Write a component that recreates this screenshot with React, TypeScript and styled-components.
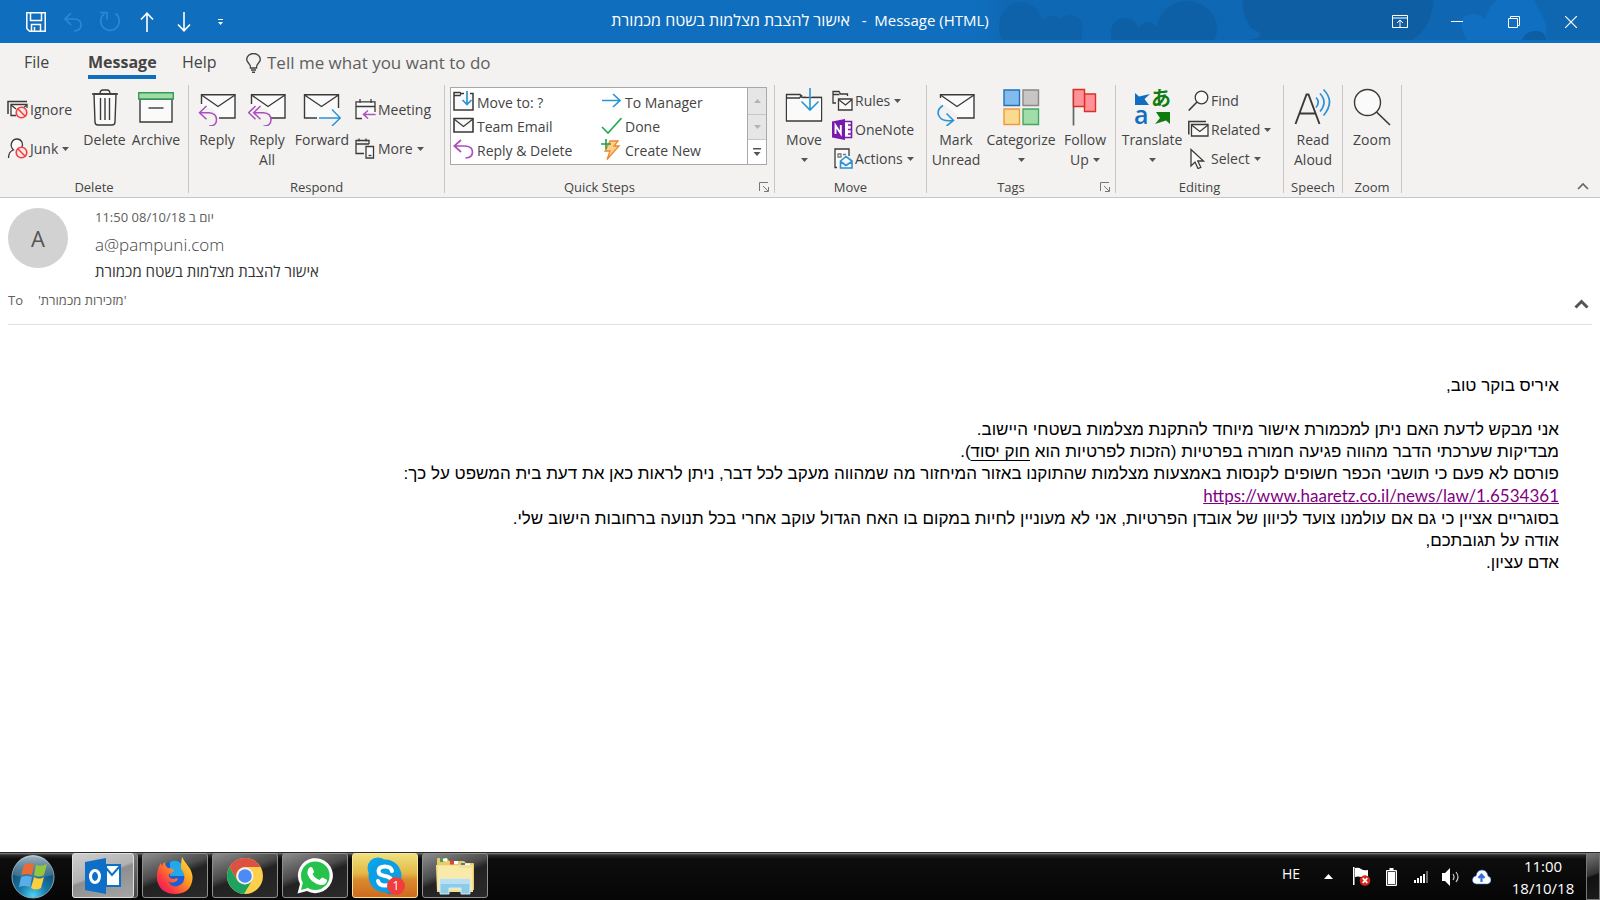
import React from "react";
import styled, { createGlobalStyle } from "styled-components";

const UI = `"Open Sans", "Noto Sans", "Liberation Sans", sans-serif`;
const INK = "#3b3a39";
const BLUE = "#2b93d4";
const PURPLE = "#ab4fbd";
const PAPER = "#fafafa";

const GlobalStyle = createGlobalStyle`
  *, *::before, *::after { box-sizing: border-box; }
  body { margin: 0; background: #fff; font-family: ${UI}; color: #444; }
  button { font: inherit; color: inherit; background: none; border: 0; padding: 0; cursor: pointer; }
  svg { display: block; flex: none; }
`;

const Page = styled.div`
  display: flex;
  flex-direction: column;
  min-height: 100vh;
`;

/* ---------- Title bar ---------- */

const TitleBar = styled.header`
  position: relative;
  display: grid;
  grid-template-columns: 1fr auto 1fr;
  align-items: center;
  height: 43px;
  background: #106ebe;
  color: #fff;
  overflow: hidden;
`;

const Backdrop = styled.svg`
  position: absolute;
  right: 0;
  top: 0;
`;

const QuickAccess = styled.div`
  display: flex;
  align-items: center;
  padding-left: 17px;
`;

const QuickButton = styled.button<{ $dim?: boolean }>`
  display: grid;
  place-items: center;
  width: 37px;
  height: 42px;
  color: ${(p) => (p.$dim ? "#2b88d8" : "#fff")};
`;

const WindowTitle = styled.h1`
  position: relative;
  margin: 0;
  font-size: 15px;
  font-weight: 400;
  line-height: 40px;
  align-self: start;
  white-space: pre;
  bdi { font-size: 16px; }
`;

const WindowButtons = styled.div`
  position: relative;
  display: flex;
  justify-content: flex-end;
  padding-right: 1px;
`;

const WindowButton = styled.button`
  display: grid;
  place-items: center;
  width: 57px;
  height: 42px;
`;

/* ---------- Ribbon ---------- */

const Tabs = styled.nav`
  display: flex;
  gap: 26px;
  height: 42px;
  padding-left: 24px;
  background: #f3f2f1;
`;

const Tab = styled.button<{ $width: number; $active?: boolean }>`
  width: ${(p) => p.$width}px;
  height: 36px;
  padding-top: 4px;
  border-bottom: 4px solid ${(p) => (p.$active ? "#106ebe" : "transparent")};
  font-size: 16px;
  font-weight: ${(p) => (p.$active ? 700 : 400)};
  line-height: 30px;
  text-align: left;
  white-space: nowrap;
`;

const TellMe = styled.label`
  display: flex;
  align-items: center;
  gap: 6px;
  height: 40px;
`;

const TellMeInput = styled.input`
  width: 260px;
  height: 28px;
  padding: 0 0 2px;
  border: 0;
  outline: 0;
  background: transparent;
  font-family: inherit;
  font-size: 17px;
  &::placeholder { color: #605e5c; opacity: 1; }
`;

const RibbonBar = styled.div`
  display: flex;
  height: 113px;
  background: #f3f2f1;
  border-bottom: 1px solid #c8c6c4;
`;

const Group = styled.section<{ $width: number }>`
  display: flex;
  flex-direction: column;
  flex: none;
  width: ${(p) => p.$width}px;
  height: 108px;
  border-right: 1px solid #c8c6c4;
`;

const GroupBody = styled.div<{ $columns: string; $inset: number }>`
  display: grid;
  flex: none;
  grid-template-columns: ${(p) => p.$columns};
  height: 93px;
  padding-left: ${(p) => p.$inset}px;
  align-items: start;
`;

const GroupFooter = styled.div`
  display: flex;
  flex: none;
  align-items: center;
  height: 18px;
  font-size: 13px;
  line-height: 18px;
  text-align: center;
  span { flex: 1; }
  button { display: grid; place-items: center; width: 20px; height: 18px; }
`;

const LargeButton = styled.button`
  display: flex;
  flex-direction: column;
  align-items: center;
  padding-top: 3px;
  font-size: 14px;
  line-height: 20px;
  white-space: nowrap;
  svg.large { margin-bottom: 4px; }
`;

const LabelLine = styled.span`
  display: flex;
  align-items: center;
  justify-content: center;
  gap: 4px;
  height: 20px;
`;

const Stack = styled.div<{ $row: number; $top: number; $left?: number }>`
  display: grid;
  grid-auto-rows: ${(p) => p.$row}px;
  padding: ${(p) => p.$top}px 0 0 ${(p) => p.$left ?? 0}px;
`;

const SmallButton = styled.button`
  display: flex;
  align-items: center;
  gap: 2px;
  font-size: 14px;
  line-height: 20px;
  white-space: nowrap;
  svg.caret { margin-left: 2px; }
`;

const Gallery = styled.div`
  display: flex;
  height: 78px;
  margin-top: 2px;
  border: 1px solid #a6a8ab;
  background: #fff;
`;

const GalleryItems = styled.div`
  display: grid;
  flex: 1;
  grid-template-columns: 148px 1fr;
  grid-auto-rows: 24px;
  padding: 3px 0 0 2px;
`;

const GalleryItem = styled.button`
  display: flex;
  align-items: center;
  gap: 3px;
  font-size: 14px;
  line-height: 24px;
  white-space: nowrap;
  svg { margin-bottom: 4px; }
`;

const GalleryScroll = styled.div`
  display: grid;
  grid-template-rows: 26px 25px 25px;
  width: 19px;
  border-left: 1px solid #a6a8ab;
`;

const ScrollButton = styled.button<{ $off?: boolean }>`
  display: grid;
  place-items: center;
  background: ${(p) => (p.$off ? "#e6e6e6" : "#fff")};
  color: ${(p) => (p.$off ? "#b3b3b3" : "#555")};
  & + & { border-top: 1px solid #c6c6c6; }
`;

const Collapse = styled.button`
  display: grid;
  place-items: center;
  align-self: flex-end;
  width: 34px;
  height: 22px;
  margin-left: auto;
`;

/* ---------- Message ---------- */

const MessageHeader = styled.section`
  display: grid;
  grid-template-columns: 87px 1fr;
  margin: 0 8px;
  padding-top: 10px;
  border-bottom: 1px solid #e1dfdd;
`;

const Avatar = styled.div`
  display: grid;
  place-items: center;
  width: 60px;
  height: 60px;
  border-radius: 50%;
  background: #d2d2d2;
  color: #555;
  font-size: 22px;
  line-height: 60px;
`;

const Sent = styled.div`
  font-size: 13px;
  line-height: 18px;
  color: #605e5c;
`;

const Sender = styled.div`
  font-size: 17px;
  font-weight: 300;
  line-height: 38px;
  color: #444;
`;

const Subject = styled.h2`
  margin: 0;
  font-size: 15px;
  font-weight: 400;
  line-height: 14px;
  color: #333;
`;

const Recipients = styled.div`
  grid-column: 1 / -1;
  display: flex;
  align-items: center;
  gap: 15px;
  height: 46px;
  padding-bottom: 3px;
  font-size: 13px;
  line-height: 18px;
  color: #605e5c;
`;

const HeaderToggle = styled.button`
  margin: 8px 3px 0 auto;
`;

const MessageBody = styled.main`
  flex: 1;
  padding: 50px 41px 24px;
  font-family: "Liberation Sans", Arial, sans-serif;
  font-size: 17px;
  line-height: 22px;
  color: #000;
`;

const Line = styled.p`
  margin: 0;
  min-height: 22px;
`;

const Reference = styled.a`
  color: #000;
  text-underline-offset: 3px;
`;

const NewsLink = styled.a`
  font-family: Lato, sans-serif;
  color: #800080;
`;

/* ---------- Taskbar ---------- */

const Taskbar = styled.footer`
  display: flex;
  align-items: stretch;
  height: 48px;
  padding-left: 11px;
  border-top: 1px solid #2a2a2a;
  background: linear-gradient(#8a8a8a 0, #2b2b2b 2px, #0d0d0d 6px, #060606 100%);
  color: #fff;
`;

const StartButton = styled.button`
  width: 61px;
`;

const Apps = styled.div`
  display: flex;
  gap: 4px;
  padding-bottom: 2px;
`;

const AppButton = styled.button<{ $tone?: "active" | "alert" }>`
  position: relative;
  display: grid;
  place-items: center;
  width: 66px;
  border: 1px solid ${(p) => (p.$tone === "alert" ? "#f7e7a0" : "#8f8f8f")};
  border-radius: 3px;
  background: ${(p) =>
    p.$tone === "active"
      ? "linear-gradient(160deg, #cfcfcf 0%, #b2b2b2 45%, #8e8e8e 50%, #a5a5a5 100%)"
      : p.$tone === "alert"
      ? "linear-gradient(#efe07c 0%, #e3b848 45%, #d98a2c 60%, #cf6a20 100%)"
      : "linear-gradient(160deg, #8d8d8d 0%, #4c4c4c 40%, #222 52%, #2a2a2a 100%)"};
`;

const Stacked = styled.div`
  display: flex;
  width: 66px;
  padding-right: 4px;
  border: 1px solid #8f8f8f;
  border-radius: 3px;
  background: linear-gradient(#777, #444);
  ${AppButton} { width: 62px; margin: -1px; border-color: #e0e0e0; }
`;

const Badge = styled.span`
  position: absolute;
  right: 12px;
  bottom: 2px;
  width: 18px;
  height: 18px;
  border-radius: 50%;
  background: #f03e3e;
  color: #fff;
  font-size: 12px;
  line-height: 18px;
  text-align: center;
`;

const Tray = styled.div`
  display: flex;
  align-items: center;
  margin-left: auto;
`;

const Language = styled.button`
  width: 20px;
  margin-right: 9px;
  padding-bottom: 5px;
  font-size: 14px;
  line-height: 18px;
`;

const TrayButton = styled.button<{ $wide?: boolean }>`
  display: grid;
  place-items: center;
  width: ${(p) => (p.$wide ? 36 : 30)}px;
  height: 46px;
`;

const Clock = styled.time`
  width: 90px;
  padding-left: 4px;
  font-size: 15px;
  line-height: 22px;
  text-align: center;
  span { display: block; }
`;

const ShowDesktop = styled.button`
  width: 14px;
  border: 1px solid #777;
  align-self: stretch;
  background: linear-gradient(160deg, #777, #333 45%, #111 50%, #1c1c1c);
`;

/* ---------- Icons ---------- */

type Kids = { children: React.ReactNode };

const Big = ({ children }: Kids) => (
  <svg className="large" width="38" height="38" viewBox="0 0 38 38" fill="none" stroke={INK} strokeWidth="1.4">{children}</svg>
);
const Small = ({ children }: Kids) => (
  <svg width="21" height="21" viewBox="0 0 21 21" fill="none" stroke={INK} strokeWidth="1.3">{children}</svg>
);
const Caret = () => (
  <svg className="caret" width="7" height="4" viewBox="0 0 7 4"><path d="M0 0h7L3.500 4z" fill="#555" /></svg>
);
const Launcher = () => (
  <svg width="10" height="10" viewBox="0 0 10 10" fill="none" stroke="#777"><path d="M.5 9V.5H9M4 4l5 5M9.500 5v4.500H5" /></svg>
);
const Envelope = ({ cut = "M3.500 16V6.700H37V30H21" }: { cut?: string }) => (
  <>
    <path d="M3.500 6.700H37V30H3.500z" fill={PAPER} stroke="none" />
    <path d={cut} /><path d="M3.500 7L20 18.500 37 7" />
  </>
);
const NoSign = ({ x, y }: { x: number; y: number }) => (
  <g stroke="#f04040" strokeWidth="1.600"><circle cx={x} cy={y} r="5.300" fill="#fbe9e9" /><path d={`M${x - 3.7} ${y - 3.7}l7.400 7.400`} /></g>
);

const IgnoreIcon = () => (
  <Small><path d="M1 15V2.500H20" strokeWidth="1.500" /><path d="M9 16.500H4V5.500H20V9" fill={PAPER} /><path d="M4 6l5 4M20 6l-4 3" /><NoSign x={14.5} y={13.5} /></Small>
);
const JunkIcon = () => (
  <Small><path d="M1.500 20c0-4 2-7 5-8-5-5-1-11 3.500-11s7 5 4.500 9" fill={PAPER} /><NoSign x={14.5} y={14.5} /></Small>
);
const TrashIcon = () => (
  <Big><path d="M8 6h22l-1 28q0 3-3 3H12q-3 0-3-3z" fill={PAPER} /><path d="M6 6h26M14 6q0-4 3-4h4q3 0 3 4M14.500 10v22M19 10v22M23.500 10v22" /></Big>
);
const ArchiveIcon = () => (
  <Big><path d="M3 11H35V34H3z" fill={PAPER} /><path d="M1.700 4.700H36.300V11H1.700z" fill="#a1dba9" stroke="#359b55" /><path d="M11.500 20h15" /></Big>
);
const ReplyIcon = () => (
  <Big><Envelope /><path d="M0 20h14l5 6v12H0z" fill="#f3f2f1" stroke="none" /><path d="M8.500 18L1.500 24.700 8.500 31.300M1.500 24.700H11q7.500.5 7.500 7T11 38" stroke={PURPLE} strokeWidth="1.500" /></Big>
);
const ReplyAllIcon = () => (
  <Big><Envelope /><path d="M0 20h18l5 6v12H0z" fill="#f3f2f1" stroke="none" /><path d="M7.500 18L.7 24.700 7.500 31.300M12.500 18L5.700 24.700l6.800 6.600M6 24.700H15.500q7.500.5 7.500 7T15.500 38" stroke={PURPLE} strokeWidth="1.500" /></Big>
);
const ForwardIcon = () => (
  <Big><path d="M1.500 6.700H35.500V30H1.500z" fill={PAPER} stroke="none" /><path d="M35.500 20V6.700H1.500V30H14M1.500 7L18.500 18.500 35.500 7" /><path d="M16 30H37M29 21.500L37.300 30 29 38" stroke={BLUE} strokeWidth="1.500" /></Big>
);
const MeetingIcon = () => (
  <Small><path d="M1 3H20V19H1z" fill={PAPER} stroke="none" /><path d="M7 19.500H1V2.800H20V13M1 7.500H20M5 0v4M16 0v4" /><path d="M13 11.500L8.500 15.500 13 19.500M8.500 15.500H20.500" stroke={PURPLE} strokeWidth="1.500" /></Small>
);
const MoreIcon = () => (
  <Small><path d="M9 15.500H1V2.500H14V6M1 6H14M4 .5v3M11 .5v3" /><path d="M11 8.500H18.500V20H11z" fill={PAPER} /><path d="M13.500 17.500h3" /></Small>
);
const MoveToIcon = () => (
  <Small><path d="M11 2.500H8L7 1.500H1V19H20V2.500H17" fill={PAPER} strokeWidth="1.500" /><path d="M1 4.500H7L8 2.500" /><path d="M14 0V13M9.500 9l4.500 4.500L18.500 9" stroke={BLUE} strokeWidth="1.700" /></Small>
);
const TeamIcon = () => (
  <Small><path d="M1 3.500H20V17H1z" fill={PAPER} strokeWidth="1.600" /><path d="M1 4l9.500 7.500L20 4" /></Small>
);
const ReplyDeleteIcon = () => (
  <Small><path d="M8 1L1.200 7 8 13M1.200 7H12.500q7 .5 7 6t-7 6" stroke={PURPLE} strokeWidth="1.700" /></Small>
);
const ToManagerIcon = () => (
  <Small><path d="M1 9.500H19M12 3l7 6.500L12 16" stroke={BLUE} strokeWidth="1.700" /></Small>
);
const DoneIcon = () => (
  <Small><path d="M1 12l6 6L20.500 3" stroke="#22b04e" strokeWidth="1.700" /></Small>
);
const CreateIcon = () => (
  <Small><path d="M9 2h8l-4 5h5L6 20.500 9 12H4z" fill="#fbd185" stroke="#ef8733" /><path d="M5 0v10M0 5h10" stroke="#22a04e" strokeWidth="1.600" /></Small>
);
const MoveIcon = () => (
  <Big><path d="M1.500 6.500V33H36.500V9.500H27M21 9.500H17L15 6.500H1.500V10H14.500L17 7" fill={PAPER} /><path d="M17 9.500H36V32H2V11H15z" fill={PAPER} stroke="none" /><path d="M36.500 9.500H17" /><path d="M25 0V22M16.500 13.500L25 22 33.500 13.500" stroke={BLUE} strokeWidth="1.600" /></Big>
);
const RulesIcon = () => (
  <Small><path d="M4 13H1V1.500H7L8.500 4H15.500V6M1 4.500H7.500" /><path d="M6.500 9H20V20H6.500z" fill={PAPER} /><path d="M6.500 9.500l7 5.500L20 9.500" /></Small>
);
const OneNoteIcon = () => (
  <Small><g stroke="none"><path d="M0 2.500L13 0V21L0 18.500z" fill="#7719aa" /><path d="M13 2.500H20V18.500H13z" fill="#fff" /></g><path d="M13 2.500H19.500V18.500H13M16 6H20M16 10.500H20M16 15H20" stroke="#7719aa" strokeWidth="1.600" /><path d="M3.500 15V6.500L8.800 14.500V6" stroke="#fff" strokeWidth="1.900" /></Small>
);
const ActionsIcon = () => (
  <Small><path d="M5 19.500H3V1H17V8" fill={PAPER} /><path d="M6 6h3v3H6zM11 6.500h3" stroke="#777" /><path d="M8.500 13L14 8.500 20 13V20H8.500zM8.500 13.500L14 17.500 20 13.500" fill={PAPER} stroke={BLUE} strokeWidth="1.600" /></Small>
);
const MarkUnreadIcon = () => (
  <Big><Envelope cut="M3.500 10V6.700H37V30H20" /><path d="M0 17h8l12 10v11H0z" fill="#f3f2f1" stroke="none" /><path d="M6 17.500Q-1 22 2 28t14 4.500M9.500 25.500L16.500 32.500 9.500 38" stroke={BLUE} strokeWidth="1.600" /></Big>
);
const CategorizeIcon = () => (
  <Big><path d="M2 2H17.500V17.500H2z" fill="#83bbec" stroke="#2272b9" /><path d="M21 2H36.500V17.500H21z" fill="#c8c6c4" stroke="#8a8886" /><path d="M2 21H17.500V36.500H2z" fill="#f8db8f" stroke="#ee9a3c" /><path d="M21 21H36.500V36.500H21z" fill="#a1dda9" stroke="#4aa564" /></Big>
);
const FlagIcon = () => (
  <Big><path d="M7.500 1V37.500" stroke="#666" strokeWidth="1.700" /><path d="M18.500 6H29.500V23.500H18.500z" fill="#ff9199" stroke="#d93025" /><path d="M7.500 1.500H18.500V18.500H7.500z" fill="#ff9199" stroke="#d93025" /></Big>
);
const TranslateIcon = () => (
  <svg className="large" width="38" height="38" viewBox="0 0 38 38" overflow="visible">
    <path d="M2 5l4 3.500L17 6l-5.500 5L16 17H2z" fill="#106ebe" />
    <path d="M37 36l-4-3.500L22 36l5-6-4-6H37z" fill="#107c10" />
    <text x="1" y="36" fontFamily="Open Sans, sans-serif" fontSize="25" fontWeight="600" fill="#106ebe">a</text>
    <text x="18" y="18" fontFamily="Noto Sans CJK JP, sans-serif" fontSize="20" fontWeight="700" fill="#107c10">あ</text>
  </svg>
);
const FindIcon = () => (
  <Small><circle cx="13.500" cy="7.500" r="6.300" fill={PAPER} /><path d="M9 12L.7 20.500" strokeWidth="1.600" /></Small>
);
const RelatedIcon = () => (
  <Small><path d="M.8 15.500V2.500H18" strokeWidth="1.500" /><path d="M3.500 5.500H20V17H3.500z" fill={PAPER} /><path d="M3.500 6l8.300 6.500L20 6" /></Small>
);
const SelectIcon = () => (
  <Small><path d="M3 1.500V18l4-4 3 6.500 2.800-1.200-3-6.300H15.500z" fill={PAPER} /></Small>
);
const ReadAloudIcon = () => (
  <Big><path d="M1.500 36L12.500 6.500h2L25.500 36M6 25.500H21" strokeWidth="1.900" /><path d="M22 9.500q4.500 4.500 0 10M26 5.500q8 8.500 0 18M29.500 1.500q12 12 0 26" stroke={BLUE} strokeWidth="1.700" /></Big>
);
const ZoomIcon = () => (
  <Big><circle cx="14.500" cy="14.500" r="13" fill={PAPER} /><path d="M23.500 24L37 37" strokeWidth="1.700" /></Big>
);

const StartOrb = () => (
  <svg width="44" height="44" viewBox="0 0 44 44">
    <defs>
      <radialGradient id="orb" cx=".5" cy=".95" r=".85"><stop offset="0" stopColor="#4fd4f5" /><stop offset=".4" stopColor="#1778a8" /><stop offset="1" stopColor="#123c5c" /></radialGradient>
      <linearGradient id="shine" x1="0" y1="0" x2="0" y2="1"><stop offset="0" stopColor="#cddbe2" stopOpacity=".8" /><stop offset="1" stopColor="#5d8ca6" stopOpacity=".4" /></linearGradient>
    </defs>
    <circle cx="22" cy="22" r="21" fill="url(#orb)" stroke="#8ea9b5" />
    <path d="M2 20A20 20 0 0 1 42 20Q22 26 2 20z" fill="url(#shine)" />
    <path d="M13 10q5-3 10-1l-2 11q-5-2-11 0z" fill="#ec6a33" />
    <path d="M25 10q5 2 11-1l-3 11q-5 3-10 0z" fill="#94c63d" />
    <path d="M10 22q5-2 11 0l-2 10q-6-2-11 0z" fill="#5aaee8" />
    <path d="M23 22q5 3 10 0l-3 11q-5 3-10 0z" fill="#fbcf3e" />
  </svg>
);
const OutlookIcon = () => (
  <svg width="38" height="38" viewBox="0 0 38 38">
    <path d="M22 8H36V29H22z" fill="#fff" stroke="#0f6fc6" strokeWidth="2" /><path d="M22 11l6 7 8-9" fill="none" stroke="#0f6fc6" strokeWidth="2" />
    <path d="M1 5L22 1V37L1 33z" fill="#0f6fc6" /><ellipse cx="11" cy="19.500" rx="4.500" ry="6" fill="none" stroke="#fff" strokeWidth="3" />
  </svg>
);
const FirefoxIcon = () => (
  <svg width="38" height="38" viewBox="0 0 38 38">
    <defs><linearGradient id="fox" x1="1" y1="0" x2="0" y2="1"><stop offset="0" stopColor="#fff04a" /><stop offset=".4" stopColor="#ff9a1e" /><stop offset=".75" stopColor="#fb3446" /><stop offset="1" stopColor="#d9127c" /></linearGradient></defs>
    <circle cx="19" cy="19" r="15" fill="#1a5fd6" /><path d="M14 5q8-4 13 4l2 10H14z" fill="#23a8ea" />
    <path d="M26 0q2 4 6 9 5 6 4.500 13Q35 36 20 37 4 37 1 23 0 13 5 6l1 3q1-3 3-4 0 4 3 6 4 0 6 2-1 3-5 4-1 2 1 4 3 2 7 0 2 2-2 4-5 2-7-1 3 7 10 5 8-3 6-12-1-3-3-5 0-8 1-12z" fill="url(#fox)" />
  </svg>
);
const ChromeIcon = () => (
  <svg width="38" height="38" viewBox="0 0 38 38">
    <circle cx="19" cy="19" r="18" fill="#fcd04b" /><path d="M3.400 10A18 18 0 0 1 34.600 10H19a9 9 0 0 0-8 13z" fill="#dd5144" />
    <path d="M3.400 10A18 18 0 0 0 18 37l8-13.500a9 9 0 0 1-15-.5z" fill="#1da261" /><circle cx="19" cy="19" r="8.500" fill="#f2f2f2" /><circle cx="19" cy="19" r="6.800" fill="#4c8bf5" />
  </svg>
);
const WhatsAppIcon = () => (
  <svg width="38" height="38" viewBox="0 0 38 38">
    <path d="M1.500 36.500L4 27A17.500 17.500 0 1 1 11 34z" fill="#fff" /><circle cx="19.300" cy="18.700" r="14.300" fill="#27c24c" /><path d="M5 33l2-8 5 6z" fill="#27c24c" />
    <path d="M13.500 10.500q2-1 3 .5l1.500 3.500q0 1-1.500 2.500 2.500 4.500 7 6l2-2q1-.8 2 0l3 1.500q1 .7 0 3-2 3-6 2.500-10-2-13-11-.5-4 2-6.500z" fill="#fff" />
  </svg>
);
const SkypeIcon = () => (
  <svg width="38" height="38" viewBox="0 0 38 38">
    <circle cx="12" cy="11" r="10.500" fill="#0aa5ea" /><circle cx="26" cy="27" r="10.500" fill="#0a8fd8" /><circle cx="19" cy="19" r="16.500" fill="#0c9fe6" />
    <path d="M26 14q-1-4.500-7-4.500T12.500 14q0 4 6.500 5t6.500 5q-.5 4.500-6.500 4.500T12 24" fill="none" stroke="#fff" strokeWidth="4" strokeLinecap="round" />
  </svg>
);
const ExplorerIcon = () => (
  <svg width="40" height="40" viewBox="0 0 40 40">
    <path d="M2 3q0-1 1-1h9l2 3h15l2 2h7q1 0 1 1v26H2z" fill="#e9cb6c" /><path d="M5 2h5v4H5z" fill="#4b9c4f" /><path d="M8 2.500h4v3H8zM17 5h6v3h-6zM29 7.500h6v3h-6z" fill="#fff" /><path d="M15 4.500h4v4h-4z" fill="#d9472f" /><path d="M26 7h4v4h-4z" fill="#3a7dc0" />
    <path d="M1 9h37v27H2z" fill="#f5e091" /><path d="M3 10h20l2 2h12v22H3z" fill="#f9eaa9" />
    <path d="M5 25q0-2 2-2h26q2 0 2 2v13h-9v-6H14v6H5z" fill="#8ecbe8" stroke="#c9ecf9" /><path d="M5 25q0-2 2-2h26q2 0 2 2v3H5z" fill="#b9e0f2" />
  </svg>
);

/* ---------- Screen ---------- */

const subject = "אישור להצבת מצלמות בשטח מכמורת";

function Ribbon() {
  return (
    <RibbonBar>
      <Group $width={189}>
        <GroupBody $columns="73px 49px 54px" $inset={7}>
          <Stack $row={39} $top={5}>
            <SmallButton><IgnoreIcon />Ignore</SmallButton>
            <SmallButton><JunkIcon />Junk<Caret /></SmallButton>
          </Stack>
          <LargeButton><TrashIcon /><LabelLine>Delete</LabelLine></LargeButton>
          <LargeButton><ArchiveIcon /><LabelLine>Archive</LabelLine></LargeButton>
        </GroupBody>
        <GroupFooter><span>Delete</span></GroupFooter>
      </Group>
      <Group $width={256}>
        <GroupBody $columns="50px 50px 60px 1fr" $inset={3}>
          <LargeButton><ReplyIcon /><LabelLine>Reply</LabelLine></LargeButton>
          <LargeButton><ReplyAllIcon /><LabelLine>Reply</LabelLine><LabelLine>All</LabelLine></LargeButton>
          <LargeButton><ForwardIcon /><LabelLine>Forward</LabelLine></LargeButton>
          <Stack $row={39} $top={5} $left={3}>
            <SmallButton><MeetingIcon />Meeting</SmallButton>
            <SmallButton><MoreIcon />More<Caret /></SmallButton>
          </Stack>
        </GroupBody>
        <GroupFooter><span>Respond</span></GroupFooter>
      </Group>
      <Group $width={330}>
        <GroupBody $columns="317px" $inset={5}>
          <Gallery>
            <GalleryItems>
              <GalleryItem><MoveToIcon />Move to: ?</GalleryItem>
              <GalleryItem><ToManagerIcon />To Manager</GalleryItem>
              <GalleryItem><TeamIcon />Team Email</GalleryItem>
              <GalleryItem><DoneIcon />Done</GalleryItem>
              <GalleryItem><ReplyDeleteIcon />Reply &amp; Delete</GalleryItem>
              <GalleryItem><CreateIcon />Create New</GalleryItem>
            </GalleryItems>
            <GalleryScroll>
              <ScrollButton $off aria-label="Previous row"><svg width="7" height="4"><path d="M0 4h7L3.500 0z" fill="currentColor" /></svg></ScrollButton>
              <ScrollButton $off aria-label="Next row"><svg width="7" height="4"><path d="M0 0h7L3.500 4z" fill="currentColor" /></svg></ScrollButton>
              <ScrollButton aria-label="More quick steps"><svg width="8" height="8"><path d="M0 0h8v1.500H0zM.5 4h7L4 8z" fill="currentColor" /></svg></ScrollButton>
            </GalleryScroll>
          </Gallery>
        </GroupBody>
        <GroupFooter><span>Quick Steps</span><button aria-label="Quick Steps options"><Launcher /></button></GroupFooter>
      </Group>
      <Group $width={152}>
        <GroupBody $columns="48px 1fr" $inset={5}>
          <LargeButton><MoveIcon /><LabelLine>Move</LabelLine><LabelLine><Caret /></LabelLine></LargeButton>
          <Stack $row={29} $top={1} $left={4}>
            <SmallButton><RulesIcon />Rules<Caret /></SmallButton>
            <SmallButton><OneNoteIcon />OneNote</SmallButton>
            <SmallButton><ActionsIcon />Actions<Caret /></SmallButton>
          </Stack>
        </GroupBody>
        <GroupFooter><span>Move</span></GroupFooter>
      </Group>
      <Group $width={189}>
        <GroupBody $columns="52px 78px 50px" $inset={3}>
          <LargeButton><MarkUnreadIcon /><LabelLine>Mark</LabelLine><LabelLine>Unread</LabelLine></LargeButton>
          <LargeButton><CategorizeIcon /><LabelLine>Categorize</LabelLine><LabelLine><Caret /></LabelLine></LargeButton>
          <LargeButton><FlagIcon /><LabelLine>Follow</LabelLine><LabelLine>Up<Caret /></LabelLine></LargeButton>
        </GroupBody>
        <GroupFooter><span>Tags</span><button aria-label="Tags options"><Launcher /></button></GroupFooter>
      </Group>
      <Group $width={168}>
        <GroupBody $columns="64px 1fr" $inset={4}>
          <LargeButton><TranslateIcon /><LabelLine>Translate</LabelLine><LabelLine><Caret /></LabelLine></LargeButton>
          <Stack $row={29} $top={1} $left={4}>
            <SmallButton><FindIcon />Find</SmallButton>
            <SmallButton><RelatedIcon />Related<Caret /></SmallButton>
            <SmallButton><SelectIcon />Select<Caret /></SmallButton>
          </Stack>
        </GroupBody>
        <GroupFooter><span>Editing</span></GroupFooter>
      </Group>
      <Group $width={59}>
        <GroupBody $columns="1fr" $inset={0}>
          <LargeButton><ReadAloudIcon /><LabelLine>Read</LabelLine><LabelLine>Aloud</LabelLine></LargeButton>
        </GroupBody>
        <GroupFooter><span>Speech</span></GroupFooter>
      </Group>
      <Group $width={59}>
        <GroupBody $columns="1fr" $inset={0}>
          <LargeButton><ZoomIcon /><LabelLine>Zoom</LabelLine></LargeButton>
        </GroupBody>
        <GroupFooter><span>Zoom</span></GroupFooter>
      </Group>
      <Collapse aria-label="Collapse the ribbon">
        <svg width="12" height="8" viewBox="0 0 12 8" fill="none" stroke="#666" strokeWidth="1.700"><path d="M1 7l5-5 5 5" /></svg>
      </Collapse>
    </RibbonBar>
  );
}

export default function App() {
  return (
    <Page>
      <GlobalStyle />
      <TitleBar>
        <Backdrop width="620" height="40" viewBox="0 0 620 40" aria-hidden="true">
          <defs>
            <linearGradient id="fade" x1="0" x2="1"><stop offset="0" stopColor="#0f68b4" stopOpacity="0" /><stop offset=".04" stopColor="#0f68b4" /><stop offset="1" stopColor="#0f67b2" /></linearGradient>
          </defs>
          <path d="M0 0H620V40H0z" fill="url(#fade)" />
          <g fill="#0e62aa"><ellipse cx="41" cy="27" rx="22" ry="25" /><circle cx="72" cy="28" r="12" /><circle cx="90" cy="28" r="13" /><path d="M40 28h62v12H40z" /></g>
          <g fill="#0e60a6"><ellipse cx="207" cy="29" rx="30" ry="28" /><circle cx="145" cy="32" r="14" /><circle cx="168" cy="32" r="10" /><path d="M131 32h80v8h-80z" /></g>
          <path d="M263 0H453Q452 28 432 40H268q24-3 3-12-10-14-8-28z" fill="#0e5ea3" />
          <path d="M487 40q-12-22 0-24 8-5 18 3Q512-2 522 0h32q10 20 12 24v16z" fill="#116fc1" />
          <path d="M542 40q4-9 14-9t10 9z" fill="#0e5ea3" />
        </Backdrop>
        <QuickAccess>
          <QuickButton aria-label="Save"><svg width="20" height="20" viewBox="0 0 20 20" fill="none" stroke="currentColor" strokeWidth="1.500"><path d="M.8.8H19.200V19.200H3.500L.8 16.500zM4.500 1V8.500H15.500V1M5.500 19V12.500H14.500V19M8.500 15v4" /></svg></QuickButton>
          <QuickButton $dim aria-label="Undo"><svg width="20" height="20" viewBox="0 0 20 20" fill="none" stroke="currentColor" strokeWidth="1.700"><path d="M8 1L2 7l6 6M2 7h10q6 .5 6 6t-7 6" /></svg></QuickButton>
          <QuickButton $dim aria-label="Redo"><svg width="22" height="21" viewBox="0 0 22 21" fill="none" stroke="currentColor" strokeWidth="1.700"><path d="M16.500 2.500A9.300 9.300 0 1 1 5.500 2.500M1 1.500h7v7" /></svg></QuickButton>
          <QuickButton aria-label="Previous item"><svg width="14" height="20" viewBox="0 0 14 20" fill="none" stroke="currentColor" strokeWidth="1.600"><path d="M7 20V1M1 7.500L7 1.200l6 6.300" /></svg></QuickButton>
          <QuickButton aria-label="Next item"><svg width="14" height="20" viewBox="0 0 14 20" fill="none" stroke="currentColor" strokeWidth="1.600"><path d="M7 0v19M1 12.500L7 18.800l6-6.300" /></svg></QuickButton>
          <QuickButton aria-label="Customize toolbar"><svg width="5" height="6" viewBox="0 0 5 6"><path d="M0 0h5v1H0zM0 3h5L2.500 6z" fill="currentColor" /></svg></QuickButton>
        </QuickAccess>
        <WindowTitle><bdi>{subject}</bdi>{"   -  Message (HTML)"}</WindowTitle>
        <WindowButtons>
          <WindowButton aria-label="Ribbon display options"><svg width="16" height="13" viewBox="0 0 16 13" fill="none" stroke="#fff"><path d="M.5.5h15v12H.5zM.5 3h15M8 12V5M5 8l3-3 3 3" /></svg></WindowButton>
          <WindowButton aria-label="Minimize"><svg width="12" height="1"><path d="M0 0h12v1H0z" fill="#fff" /></svg></WindowButton>
          <WindowButton aria-label="Restore"><svg width="12" height="12" viewBox="0 0 12 12" fill="none" stroke="#fff"><path d="M.5 2.500h9v9h-9zM2.500 2.500v-2h9v9h-2" /></svg></WindowButton>
          <WindowButton aria-label="Close"><svg width="12" height="12" viewBox="0 0 12 12" fill="none" stroke="#fff" strokeWidth="1.200"><path d="M0 0l12 12M12 0L0 12" /></svg></WindowButton>
        </WindowButtons>
      </TitleBar>

      <Tabs>
        <Tab $width={38}>File</Tab>
        <Tab $width={68} $active>Message</Tab>
        <Tab $width={38}>Help</Tab>
        <TellMe>
          <svg width="15" height="20" viewBox="0 0 15 20" fill="none" stroke="#444" strokeWidth="1.400"><path d="M4.500 15q0-3-2-5Q.7 8 .7 6.500a6.800 6 0 0 1 13.600 0q0 1.500-1.800 3.500-2 2-2 5zM5 17h5M6 19.300h3" /></svg>
          <TellMeInput aria-label="Tell me what you want to do" placeholder="Tell me what you want to do" />
        </TellMe>
      </Tabs>
      <Ribbon />

      <MessageHeader>
        <Avatar>A</Avatar>
        <div>
          <Sent><bdo dir="ltr">11:50 08/10/18 <bdi>יום ב</bdi></bdo></Sent>
          <Sender>a@pampuni.com</Sender>
          <Subject>{subject}</Subject>
        </div>
        <Recipients>
          <span>To</span>
          <bdi>'מזכירות מכמורת'</bdi>
          <HeaderToggle aria-label="Collapse header"><svg width="15" height="10" viewBox="0 0 15 10" fill="none" stroke="#555" strokeWidth="3"><path d="M1.500 8.500l6-6 6 6" /></svg></HeaderToggle>
        </Recipients>
      </MessageHeader>

      <MessageBody dir="rtl" lang="he">
        <Line>איריס בוקר טוב,</Line>
        <Line />
        <Line>אני מבקש לדעת האם ניתן למכמורת אישור מיוחד להתקנת מצלמות בשטחי היישוב.</Line>
        <Line>מבדיקות שערכתי הדבר מהווה פגיעה חמורה בפרטיות (הזכות לפרטיות הוא <Reference href="#">חוק יסוד</Reference>).</Line>
        <Line>פורסם לא פעם כי תושבי הכפר חשופים לקנסות באמצעות מצלמות שהתוקנו באזור המיחזור מה שמהווה מעקב לכל דבר, ניתן לראות כאן את דעת בית המשפט על כך:</Line>
        <Line><NewsLink dir="ltr" href="#">https://www.haaretz.co.il/news/law/1.6534361</NewsLink></Line>
        <Line>בסוגריים אציין כי גם אם עולמנו צועד לכיוון של אובדן הפרטיות, אני לא מעוניין לחיות במקום בו האח הגדול עוקב אחרי בכל תנועה ברחובות הישוב שלי.</Line>
        <Line>אודה על תגובתכם,</Line>
        <Line>אדם עציון.</Line>
      </MessageBody>

      <Taskbar>
        <StartButton aria-label="Start"><StartOrb /></StartButton>
        <Apps>
          <Stacked><AppButton $tone="active" aria-label="Outlook"><OutlookIcon /></AppButton></Stacked>
          <AppButton aria-label="Firefox"><FirefoxIcon /></AppButton>
          <AppButton aria-label="Chrome"><ChromeIcon /></AppButton>
          <AppButton aria-label="WhatsApp"><WhatsAppIcon /></AppButton>
          <AppButton $tone="alert" aria-label="Skype"><SkypeIcon /><Badge>1</Badge></AppButton>
          <AppButton aria-label="File Explorer"><ExplorerIcon /></AppButton>
        </Apps>
        <Tray>
          <Language>HE</Language>
          <TrayButton $wide aria-label="Show hidden icons"><svg width="9" height="5"><path d="M0 5h9L4.500 0z" fill="#fff" /></svg></TrayButton>
          <TrayButton aria-label="Action center"><svg width="19" height="19" viewBox="0 0 19 19"><path d="M1 0h1.500v18H1zM3 1q4-1 6 1 3 2 7 1v8q-4 1-7-1-3-1-6 0z" fill="#fff" /><circle cx="13" cy="13.500" r="5.300" fill="#d8261c" /><path d="M10.700 11.200l4.600 4.600M15.300 11.200l-4.600 4.600" stroke="#fff" strokeWidth="1.700" /></svg></TrayButton>
          <TrayButton aria-label="Battery"><svg width="11" height="18" viewBox="0 0 11 18"><path d="M3.500 0h4v2H10q1 0 1 1v14q0 1-1 1H1q-1 0-1-1V3q0-1 1-1h2.500z" fill="#fff" /><path d="M1.500 3.500h8v13h-8z" fill="none" stroke="#222" strokeWidth=".8" /></svg></TrayButton>
          <TrayButton aria-label="Network"><svg width="15" height="12" viewBox="0 0 15 12"><path d="M0 9h2v3H0zM3 7h2v5H3zM6 5h2v7H6zM9 3h2v9H9z" fill="#fff" /><path d="M12 0h2v12h-2z" fill="#666" /></svg></TrayButton>
          <TrayButton aria-label="Volume"><svg width="18" height="18" viewBox="0 0 18 18"><path d="M0 5h3l5-5v18l-5-5H0z" fill="#fff" /><path d="M11 6q2 3 0 6M14 4q4 5 0 10" fill="none" stroke="#ccc" strokeWidth="1.200" /></svg></TrayButton>
          <TrayButton aria-label="Cloud sync"><svg width="19" height="16" viewBox="0 0 19 16"><path d="M4 15Q0 14 .5 10.500 1 7 4 7q1-6 6-6t6 6q3 1 3 4t-3.500 4z" fill="#fff" stroke="#2f6fe0" strokeWidth=".6" /><path d="M9.500 13V6M6.500 9l3-3.300 3 3.300" fill="none" stroke="#2f6fe0" strokeWidth="2.200" /></svg></TrayButton>
          <Clock><span>11:00</span><span>18/10/18</span></Clock>
          <ShowDesktop aria-label="Show desktop" />
        </Tray>
      </Taskbar>
    </Page>
  );
}
